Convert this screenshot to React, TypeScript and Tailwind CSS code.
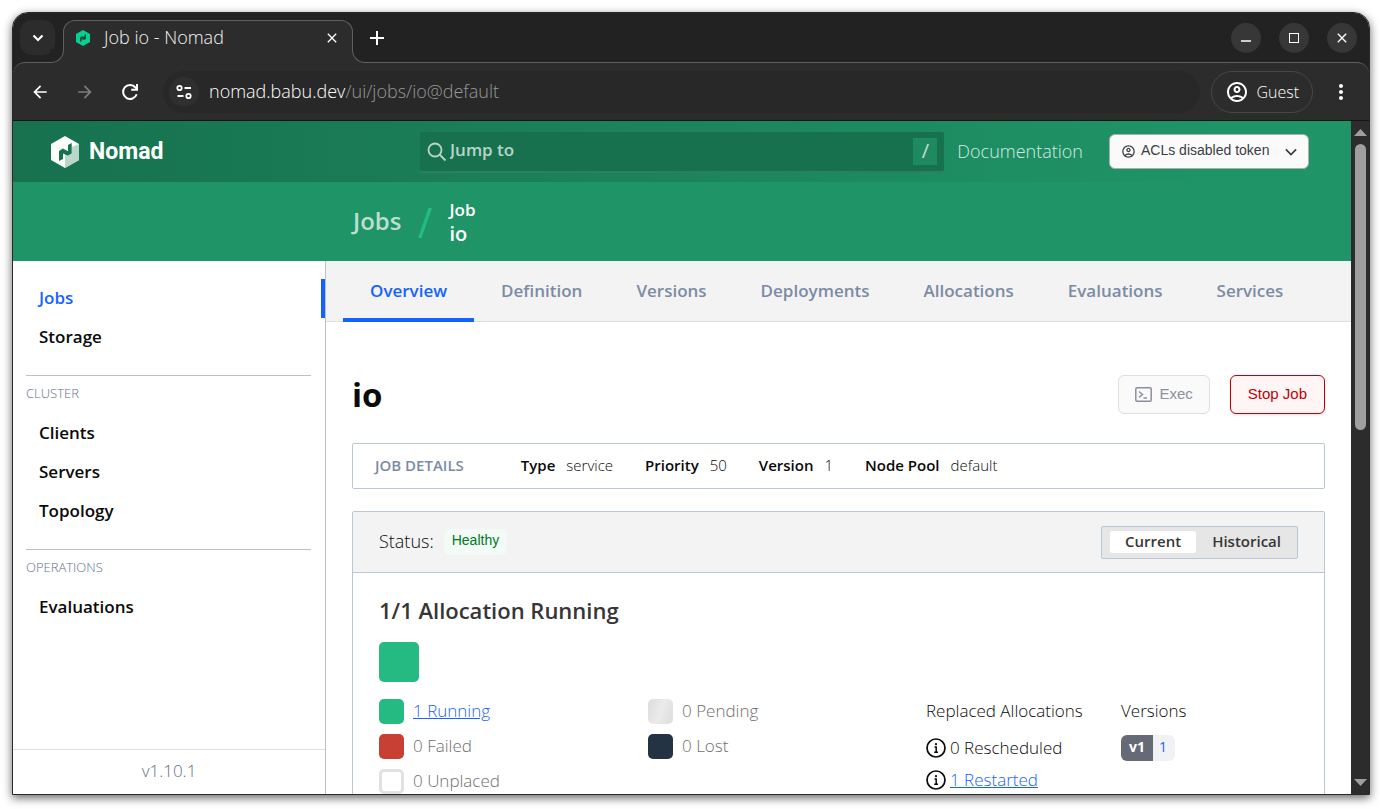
import { useState, type ReactNode } from "react";
import { MdArrowBack, MdArrowForward, MdClose, MdMoreVert, MdOutlineAccountCircle } from "react-icons/md";
import clsx from "clsx";

const NAV_TOP = ["Jobs", "Storage"];

const NAV_SECTIONS = [
  { title: "CLUSTER", items: ["Clients", "Servers", "Topology"] },
  { title: "OPERATIONS", items: ["Evaluations"] },
];

const TABS = ["Overview", "Definition", "Versions", "Deployments", "Allocations", "Evaluations", "Services"];

const DETAILS = [
  { label: "Type", value: "service" },
  { label: "Priority", value: "50" },
  { label: "Version", value: "1" },
  { label: "Node Pool", value: "default" },
];

const LEGEND = [
  { label: "Running", count: 1, swatch: "bg-[#25ba81]" },
  { label: "Pending", count: 0, swatch: "bg-linear-110 from-[#dcdcdc] via-[#ebebeb] to-[#dcdcdc]" },
  { label: "Failed", count: 0, swatch: "bg-[#c84034]" },
  { label: "Lost", count: 0, swatch: "bg-[#233344]" },
  { label: "Unplaced", count: 0, swatch: "border-3 border-[#e1e1e1] bg-white" },
];

function NomadMark() {
  return (
    <svg viewBox="0 0 28 32" className="h-8 w-7 shrink-0" aria-hidden="true">
      <path d="M14 0 28 8v16l-14 8L0 24V8z" fill="#fff" />
      <path d="M28 8v16l-14 8V19l2.500 1L21 17.500V11z" fill="#b9d6ca" />
      <path d="M1 8.500 12 13.500" stroke="#b9d6ca" strokeWidth="0.600" strokeDasharray="1 1" />
      <path d="M8 25V15l4-2.400 5 2.600V9l3.700-2v10.500l-4 2.300-4.700-2.400v5.600z" fill="#17714f" />
    </svg>
  );
}

function Favicon() {
  return (
    <svg viewBox="0 0 14 16" className="h-4 w-3.5 shrink-0" aria-hidden="true">
      <path d="M7 0 14 4v8l-7 4-7-4V4z" fill="#06d092" />
      <path d="M4 12V7.200l2-1.100 2.300 1.200V4.900L10 4v4.800L8 10 5.800 8.900V11z" fill="#14503c" />
    </svg>
  );
}

function ReloadIcon() {
  return (
    <svg viewBox="0 0 20 20" className="size-5" fill="none" stroke="currentColor" strokeWidth="2" aria-hidden="true">
      <path d="M16.700 12.200A7 7 0 1 1 15.500 5.500L17 7.200" />
      <path d="M17 2v5.700h-5.800" />
    </svg>
  );
}

function TuneIcon() {
  return (
    <svg viewBox="0 0 18 16" className="h-4 w-4.5" fill="none" stroke="currentColor" strokeWidth="1.800" aria-hidden="true">
      <circle cx="4.500" cy="4" r="2.200" />
      <path d="M9.500 4H16M2.500 12h6" />
      <circle cx="13.500" cy="12" r="2.200" />
    </svg>
  );
}

function InfoIcon() {
  return (
    <svg viewBox="0 0 20 20" className="size-5 shrink-0" fill="none" stroke="#0a0a0a" strokeWidth="1.700" aria-hidden="true">
      <circle cx="10" cy="10" r="9" />
      <path d="M8.500 9h1.700v5M8.200 14.200h3.800" strokeWidth="1.500" />
      <circle cx="10" cy="6.200" r="0.500" strokeWidth="1.200" />
    </svg>
  );
}

function WindowButton({ label, children }: { label: string; children: ReactNode }) {
  return (
    <button aria-label={label} className="flex size-[30px] items-center justify-center rounded-full bg-[#373737] text-white">
      {children}
    </button>
  );
}

function TabStrip() {
  return (
    <div className="flex h-[49px] items-end bg-[#222]">
      <button
        aria-label="Search tabs"
        className="mb-[7px] ml-[7px] flex size-[35px] items-center justify-center rounded-xl bg-[#2c2c2c] text-white"
      >
        <svg viewBox="0 0 12 8" className="h-2 w-3" fill="none" stroke="currentColor" strokeWidth="2.200" aria-hidden="true">
          <path d="m1.500 1.500 4.500 4.500 4.500-4.500" />
        </svg>
      </button>
      <div className="relative z-10 -mb-px ml-2 flex h-[43px] w-[290px] items-center rounded-t-xl border-x border-t border-[#606060] bg-[#2c2c2c] pr-3 pb-2 pl-3">
        <span className="absolute bottom-0 -left-[14px] size-[14px] bg-[#2c2c2c]">
          <span className="block size-full rounded-br-[13px] border-r border-b border-[#606060] bg-[#222]" />
        </span>
        <span className="absolute -right-[14px] bottom-0 size-[14px] bg-[#2c2c2c]">
          <span className="block size-full rounded-bl-[13px] border-b border-l border-[#606060] bg-[#222]" />
        </span>
        <Favicon />
        <span className="ml-3.5 flex-1 pb-0.5 text-lg leading-6 font-light text-[#f4f4f4]">Job io - Nomad</span>
        <button aria-label="Close tab" className="text-white">
          <MdClose className="size-4" />
        </button>
      </div>
      <button aria-label="New tab" className="mb-[17px] ml-[17px] text-white">
        <svg viewBox="0 0 14 14" className="size-3.5" stroke="currentColor" strokeWidth="2" aria-hidden="true">
          <path d="M7 0v14M0 7h14" />
        </svg>
      </button>
      <div className="mr-3 mb-[9px] ml-auto flex gap-[18px]">
        <WindowButton label="Minimize">
          <span className="mt-1.5 h-0.5 w-2.5 bg-[#ccc]" />
        </WindowButton>
        <WindowButton label="Maximize">
          <span className="size-2.5 border border-white" />
        </WindowButton>
        <WindowButton label="Close">
          <MdClose className="size-4" />
        </WindowButton>
      </div>
    </div>
  );
}

function Toolbar() {
  return (
    <div className="bg-[#222]">
      <div className="flex h-[59px] items-center rounded-t-xl border-t border-b border-t-[#606060] border-b-[#151515] bg-[#2c2c2c] pl-[15px] text-white">
        <button aria-label="Back" className="p-0.5">
          <MdArrowBack className="size-5" />
        </button>
        <button aria-label="Forward" className="ml-[21px] p-0.5 text-[#7d7d7d]">
          <MdArrowForward className="size-5" />
        </button>
        <button aria-label="Reload" className="ml-[21px] p-0.5">
          <ReloadIcon />
        </button>
        <div className="ml-[21px] flex h-[42px] flex-1 items-center rounded-full bg-[#282828] pl-1.5">
          <button aria-label="View site information" className="flex size-[30px] items-center justify-center rounded-full bg-[#2f2f2f]">
            <TuneIcon />
          </button>
          <div className="ml-2.5 pb-0.5 text-lg leading-6 font-light">
            nomad.babu.dev<span className="text-[#999]">/ui/jobs/io@default</span>
          </div>
        </div>
        <button className="ml-[11px] flex h-[42px] items-center gap-[7px] rounded-full border border-[#474747] px-[13px] text-base font-light">
          <MdOutlineAccountCircle className="size-6" />
          Guest
        </button>
        <button aria-label="Menu" className="mr-4 ml-4">
          <MdMoreVert className="size-6" />
        </button>
      </div>
    </div>
  );
}

function NomadHeader() {
  return (
    <header>
      <div className="flex h-[61px] items-center bg-linear-to-r from-[#17714f] to-[#1f9467] to-90% pr-[42px] pl-[38px]">
        <a href="#" className="flex w-[369px] shrink-0 items-center gap-2.5 font-['Roboto',sans-serif] text-[23px] font-bold text-white">
          <NomadMark />
          <span className="pt-0.5">Nomad</span>
        </a>
        <div className="flex h-[39px] flex-1 items-center rounded-xs bg-[#17714f] px-[7px] shadow-[0_2px_0_#2b815f]">
          <svg viewBox="0 0 20 20" className="size-5" fill="none" stroke="#b9d4c9" strokeWidth="1.800" aria-hidden="true">
            <circle cx="8" cy="8" r="6.500" />
            <path d="m12.500 12.500 6 6" />
          </svg>
          <input
            type="text"
            aria-label="Jump to"
            placeholder="Jump to"
            className="ml-[3px] min-w-0 flex-1 pb-1 text-[17px] font-semibold text-white outline-none placeholder:text-[#b9d4c9]"
          />
          <kbd className="flex h-[27px] w-6 items-center justify-center bg-[#1f8a61] pb-0.5 font-[inherit] text-xl text-[#c5dfd4]">/</kbd>
        </div>
        <a href="#" className="ml-[13px] pb-0.5 text-lg leading-6 font-light text-[#d5ebe2]">
          Documentation
        </a>
        <button className="ml-[26px] flex h-[35px] w-[200px] items-center rounded-md border border-[#aaafac] bg-[#fafafa] px-[11px] font-['Liberation_Sans',sans-serif] text-sm text-[#3b3d45]">
          <MdOutlineAccountCircle className="mr-[5px] size-[15px]" />
          <span className="pb-1">ACLs disabled token</span>
          <svg viewBox="0 0 14 9" className="ml-auto h-2 w-3" fill="none" stroke="currentColor" strokeWidth="2" aria-hidden="true">
            <path d="m1 1.500 6 6 6-6" />
          </svg>
        </button>
      </div>
      <nav aria-label="Breadcrumb" className="flex h-[79px] items-center bg-[#1f9467] pb-0.5 pl-[340px] text-white">
        <a href="#" className="text-2xl font-semibold text-[#bcdfd1]">
          Jobs
        </a>
        <svg viewBox="0 0 14 30" className="mx-[17px] mt-1 h-[30px] w-3.5" aria-hidden="true">
          <path d="M10.500 0H14L3.500 30H0z" fill="#25ba81" />
        </svg>
        <div className="mt-0.5 font-semibold">
          <div className="text-[17px] leading-6">Job</div>
          <div className="text-xl leading-6">io</div>
        </div>
      </nav>
    </header>
  );
}

function NavItem({ label, active = false }: { label: string; active?: boolean }) {
  return (
    <li>
      <a
        href="#"
        className={clsx(
          "flex h-[39px] items-center border-r-4 pb-0.5 pl-[26px] text-[17px] font-semibold",
          active ? "border-[#1563ff] text-[#1563ff]" : "border-transparent text-[#0a0a0a]",
        )}
      >
        {label}
      </a>
    </li>
  );
}

function Sidebar() {
  return (
    <aside className="flex w-[313px] shrink-0 flex-col border-r border-[#bac1cc]">
      <nav className="flex-1 overflow-hidden pt-[18px]">
        <ul className="pb-[18px]">
          {NAV_TOP.map((item) => (
            <NavItem key={item} label={item} active={item === "Jobs"} />
          ))}
        </ul>
        {NAV_SECTIONS.map((section) => (
          <div key={section.title}>
            <h2 className="mr-3.5 ml-[13px] h-[39px] border-t border-[#bac1cc] text-[13px] leading-[34px] font-light text-[#5f6f89]">
              {section.title}
            </h2>
            <ul className="pb-[18px]">
              {section.items.map((item) => (
                <NavItem key={item} label={item} />
              ))}
            </ul>
          </div>
        ))}
      </nav>
      <footer className="flex h-[45px] items-center justify-center border-t border-[#dcdfe5] pb-0.5 text-[17px] font-light text-[#5f6f89]">
        v1.10.1
      </footer>
    </aside>
  );
}

function Tabs() {
  const [active, setActive] = useState("Overview");
  return (
    <div role="tablist" className="flex h-[61px] border-b border-[#dcdfe5] bg-[#f3f3f3] pl-[17px]">
      {TABS.map((tab) => (
        <button
          key={tab}
          role="tab"
          aria-selected={tab === active}
          onClick={() => setActive(tab)}
          className={clsx(
            "-mb-px border-b-4 px-[27px] pt-0.5 text-[17px] font-semibold",
            tab === active ? "border-[#1563ff] text-[#1563ff]" : "border-transparent text-[#7c8ba5]",
          )}
        >
          {tab}
        </button>
      ))}
    </div>
  );
}

function LegendItem({ label, count, swatch }: { label: string; count: number; swatch: string }) {
  return (
    <li className="flex h-[25px] items-center gap-[9px]">
      <span className={clsx("size-[25px] rounded-[5px]", swatch)} />
      {count > 0 ? (
        <a href="#" className="pb-0.5 text-[#1563ff] underline">
          {count} {label}
        </a>
      ) : (
        <span className="pb-0.5 text-[#6f6f6f]">
          {count} {label}
        </span>
      )}
    </li>
  );
}

function StatusPanel() {
  const [mode, setMode] = useState("Current");
  return (
    <section className="mt-[22px] rounded-xs border border-[#bac6d3]">
      <div className="flex h-[61px] items-center border-b border-[#bac6d3] bg-[#f3f3f3] px-[26px]">
        <span className="pb-0.5 text-lg font-light">Status:</span>
        <span className="ml-2.5 rounded-md bg-[#f2fbf6] px-2 pb-1 font-['Liberation_Sans',sans-serif] text-sm leading-[22px] text-[#00781e]">
          Healthy
        </span>
        <div className="ml-auto flex h-[33px] items-center rounded-xs border border-[#bac6d3] bg-[#e6e6e6] px-2 text-[15px] font-semibold text-[#363636]">
          {["Current", "Historical"].map((m) => (
            <button
              key={m}
              aria-pressed={m === mode}
              onClick={() => setMode(m)}
              className={clsx("h-[22px] rounded-xs pb-0.5 leading-5", m === mode ? "bg-white px-[15px]" : "pr-2 pl-4")}
            >
              {m}
            </button>
          ))}
        </div>
      </div>
      <div className="px-[26px] pt-5 text-[17px] font-light">
        <h3 className="text-[22px] leading-[34px] font-semibold text-[#363636]">1/1 Allocation Running</h3>
        <div className="mt-[15px] size-10 rounded-[5px] bg-[#25ba81]" />
        <div className="mt-[17px] flex">
          <ul className="grid w-[547px] grid-cols-[269px_1fr] content-start gap-y-2.5">
            {LEGEND.map((item) => (
              <LegendItem key={item.label} {...item} />
            ))}
          </ul>
          <div className="w-[195px]">
            <h4 className="leading-6">Replaced Allocations</h4>
            <ul className="mt-[9px]">
              <li className="flex h-8 items-center gap-1">
                <InfoIcon />0 Rescheduled
              </li>
              <li className="flex h-8 items-center gap-1">
                <InfoIcon />
                <a href="#" className="text-[#1563ff] underline">
                  1 Restarted
                </a>
              </li>
            </ul>
          </div>
          <div>
            <h4 className="leading-6">Versions</h4>
            <a href="#" className="mt-3 inline-flex h-[26px] overflow-hidden rounded-md bg-[#f1f2f3] text-sm leading-6">
              <span className="bg-[#656a76] px-2 font-bold text-white">v1</span>
              <span className="pr-2 pl-1.5 font-normal text-[#1563ff]">1</span>
            </a>
          </div>
        </div>
      </div>
    </section>
  );
}

function JobOverview() {
  return (
    <div className="px-[26px] pt-[53px]">
      <div className="flex h-[39px] items-center">
        <h1 className="flex-1 text-[33px] font-bold">io</h1>
        <div className="flex gap-5 font-['Liberation_Sans',sans-serif] text-[15px]">
          <button disabled className="flex h-[39px] items-center gap-[7px] rounded-md border border-[#dedfe3] bg-[#fafafa] px-4 text-[#8c909c]">
            <svg viewBox="0 0 17 15" className="h-[15px] w-[17px]" fill="none" stroke="currentColor" strokeWidth="1.500" aria-hidden="true">
              <rect x="0.800" y="0.800" width="15.400" height="13.400" rx="1.200" />
              <path d="m4 4.500 3.500 3L4 10.500M8.500 11H12" />
            </svg>
            Exec
          </button>
          <button className="h-[39px] rounded-md border border-[#c00005] bg-[#fff5f5] px-[17px] text-[#c00005] shadow-sm">Stop Job</button>
        </div>
      </div>
      <dl className="mt-[29px] flex h-[46px] items-center gap-8 rounded-xs border border-[#bac6d3] px-[22px] pb-0.5 text-[15px]">
        <dt className="mr-[25px] font-semibold text-[#7c8ba5]">JOB DETAILS</dt>
        {DETAILS.map(({ label, value }) => (
          <div key={label} className="flex gap-[11px]">
            <dt className="font-semibold">{label}</dt>
            <dd className="font-light">{value}</dd>
          </div>
        ))}
      </dl>
      <StatusPanel />
    </div>
  );
}

function Scrollbar() {
  return (
    <div className="flex w-[18px] shrink-0 flex-col items-center bg-[#2c2c2c] py-2" aria-hidden="true">
      <svg viewBox="0 0 13 7" className="h-[7px] w-[13px]">
        <path d="M6.500 0 13 7H0z" fill="#9f9f9f" />
      </svg>
      <div className="mt-2 flex-1">
        <div className="h-[45%] w-[11px] rounded-full bg-[#9f9f9f]" />
      </div>
      <svg viewBox="0 0 13 7" className="h-[7px] w-[13px]">
        <path d="M0 0h13L6.500 7z" fill="#9f9f9f" />
      </svg>
    </div>
  );
}

export default function App() {
  return (
    <div className="h-screen bg-white pt-3 pr-2.5 pb-3.5 pl-3 font-['Open_Sans','Noto_Sans',sans-serif] text-[#0a0a0a]">
      <div className="flex h-full flex-col overflow-hidden rounded-t-2xl border border-[#2a2a2a] bg-white shadow-[0_3px_10px_rgba(0,0,0,0.6)]">
        <TabStrip />
        <Toolbar />
        <div className="flex min-h-0 flex-1">
          <div className="flex min-w-0 flex-1 flex-col">
            <NomadHeader />
            <div className="flex min-h-0 flex-1">
              <Sidebar />
              <main className="min-w-0 flex-1 overflow-hidden">
                <Tabs />
                <JobOverview />
              </main>
            </div>
          </div>
          <Scrollbar />
        </div>
      </div>
    </div>
  );
}
